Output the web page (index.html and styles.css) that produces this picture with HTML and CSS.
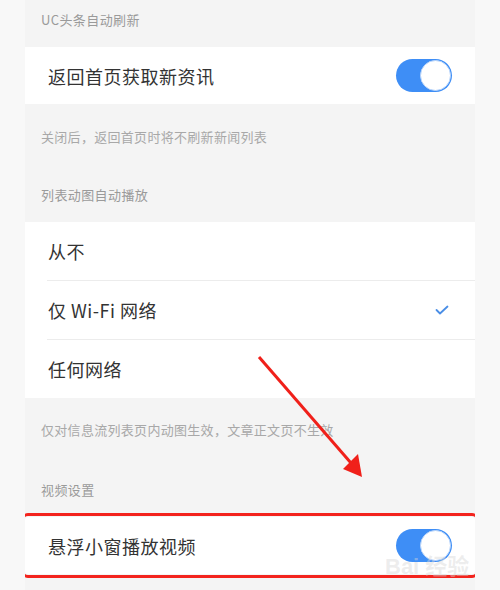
FILE: index.html
```html
<!DOCTYPE html>
<html lang="zh-CN">
<head>
  <meta charset="UTF-8">
  <title>设置</title>
  <link rel="stylesheet" href="styles.css">
</head>
<body>
  <div class="page">
    <div class="group-title">UC头条自动刷新</div>
    <div class="card">
      <div class="row">
        <span>返回首页获取新资讯</span>
        <div class="switch on"><div class="knob"></div></div>
      </div>
    </div>
    <div class="note">关闭后，返回首页时将不刷新新闻列表</div>

    <div class="group-title spaced">列表动图自动播放</div>
    <div class="card">
      <div class="row">
        <span>从不</span>
      </div>
      <div class="row">
        <span>仅 Wi-Fi 网络</span>
        <svg class="check" width="14" height="10" viewBox="0 0 14 10">
          <path d="M1.5 5 L5 8.5 L12.5 1.5" fill="none" stroke="#4a8ee6" stroke-width="1.8" stroke-linecap="round" stroke-linejoin="round"/>
        </svg>
      </div>
      <div class="row">
        <span>任何网络</span>
      </div>
    </div>
    <div class="note second">仅对信息流列表页内动图生效，文章正文页不生效</div>

    <div class="group-title spaced2">视频设置</div>
    <div class="card marked">
      <div class="row">
        <span>悬浮小窗播放视频</span>
        <div class="switch on"><div class="knob"></div></div>
      </div>
    </div>

    <!-- annotation arrow drawn over the screenshot -->
    <svg class="arrow" width="500" height="590" viewBox="0 0 500 590">
      <line x1="259" y1="357" x2="351" y2="463" stroke="#f0201a" stroke-width="3"/>
      <polygon points="343,469 362,477 358,454" fill="#f0201a"/>
    </svg>
    <div class="watermark">Bai 经验</div>
  </div>
</body>
</html>
```

FILE: styles.css
```css
body {
  margin: 0;
  background: #f8f8f8;
  font-family: "Noto Sans CJK SC", "Noto Sans", sans-serif;
}
.page {
  position: relative;
  width: 450px;
  height: 590px;
  margin-left: 25px;
  background: #f4f4f4;
  overflow: hidden;
}
.group-title {
  padding: 11px 16px 18px;
  font-size: 13px;
  line-height: 18px;
  letter-spacing: 0.4px;
  color: #9a9a9a;
}
.group-title.spaced {
  margin-top: 29px;
}
.group-title.spaced2 {
  margin-top: 31px;
}
.card {
  background: #fff;
}
.card.marked {
  outline: 3px solid #f3231d;
  outline-offset: 1px;
  border-radius: 3px;
}
.row {
  display: flex;
  align-items: center;
  justify-content: space-between;
  height: 57px;
  padding: 0 23px;
  font-size: 18px;
  letter-spacing: 0.5px;
  color: #333;
}
.card .row + .row {
  height: 58px;
  border-top: 1px solid #ececec;
  margin-left: 22px;
  padding-left: 1px;
}
.card .row:first-child:not(:last-child) {
  height: 58px;
}
.note {
  padding: 24px 16px 0;
  font-size: 13px;
  line-height: 18px;
  letter-spacing: 0.3px;
  color: #a8a8a8;
}
.note.second {
  padding-top: 23px;
}
.switch {
  display: flex;
  justify-content: flex-end;
  align-items: center;
  width: 56px;
  height: 33px;
  padding: 1px;
  box-sizing: border-box;
  border-radius: 17px;
  background: #3e8ef6;
}
.knob {
  width: 29px;
  height: 29px;
  border-radius: 50%;
  background: #fff;
  border: 1px solid #b9d5fa;
}
.check {
  margin-right: 3px;
}
.arrow {
  position: absolute;
  left: -25px;
  top: 0;
}
.watermark {
  position: absolute;
  left: 360px;
  top: 548px;
  font-family: "Liberation Sans", "Noto Sans CJK SC", sans-serif;
  font-size: 22px;
  font-weight: bold;
  color: rgba(215, 215, 215, 0.45);
}
```
